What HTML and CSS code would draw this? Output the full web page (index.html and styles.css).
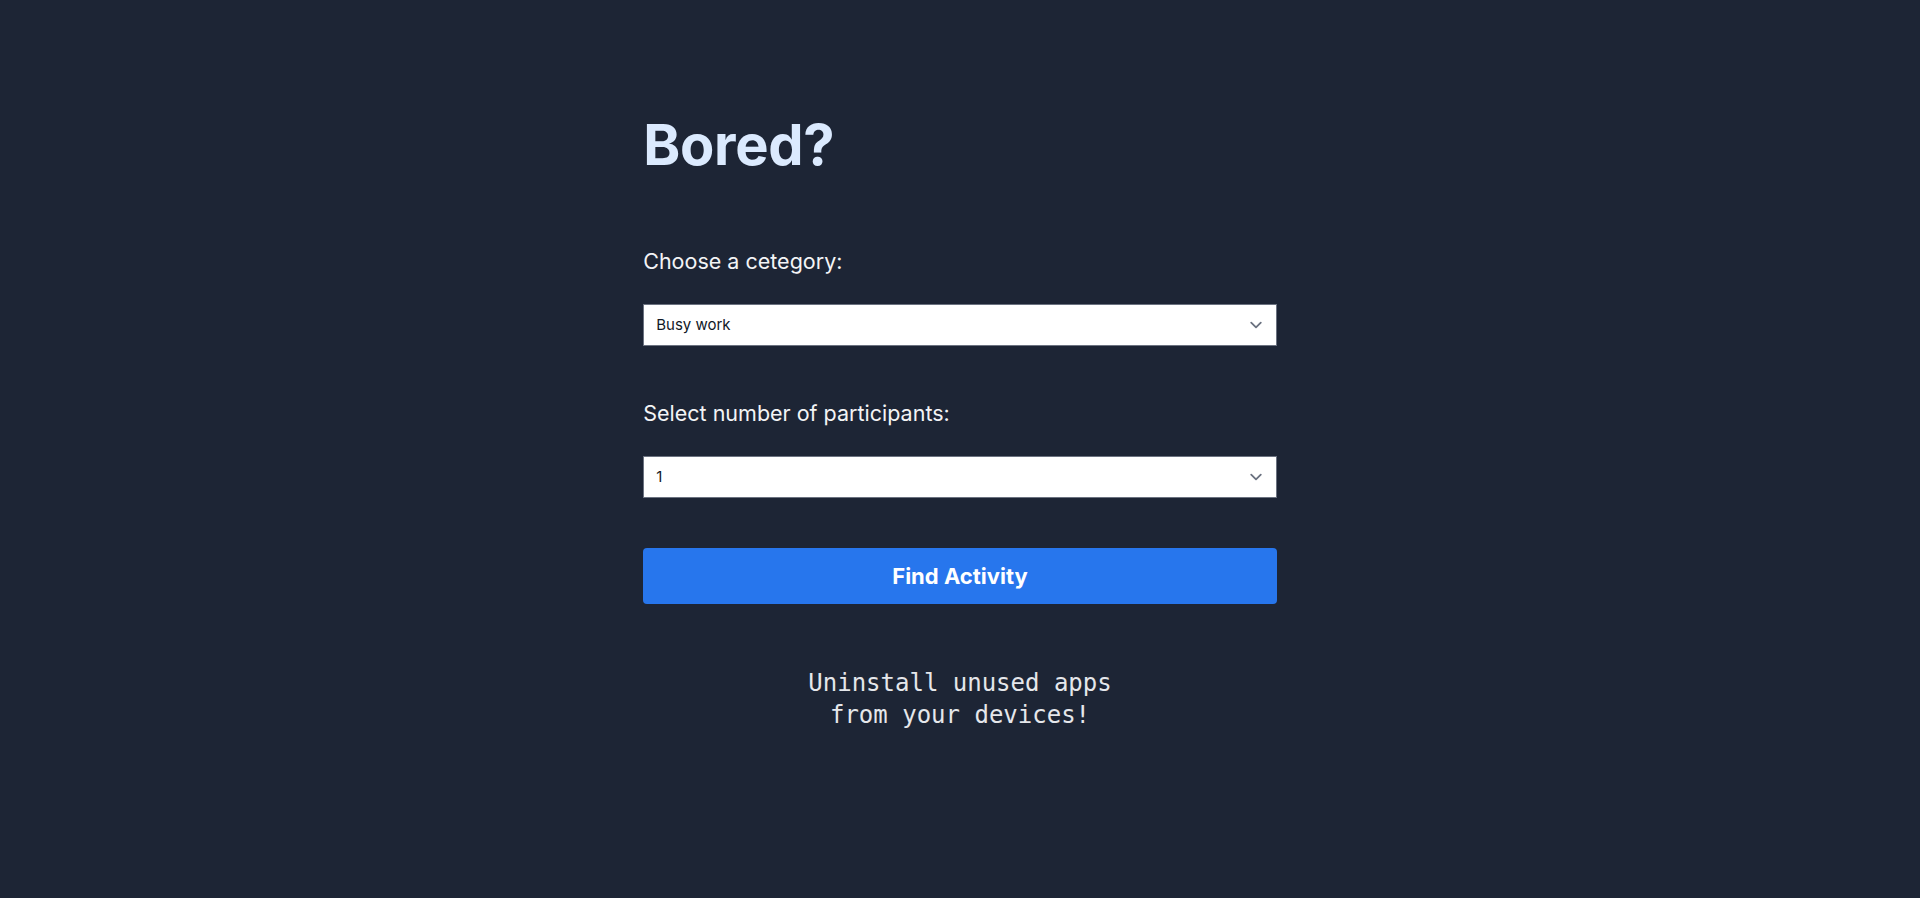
FILE: index.html
```html
<!DOCTYPE html>
<html lang="en">
<head>
<meta charset="utf-8">
<title>Bored?</title>
<link rel="stylesheet" href="styles.css">
</head>
<body>
<main class="container">
  <h1 class="title">Bored?</h1>
  <label class="label" for="category">Choose a cetegory:</label>
  <div class="select-wrap">
    <select id="category" class="select">
      <option>Busy work</option>
    </select>
    <svg class="chevron" viewBox="0 0 20 20" width="24" height="24" aria-hidden="true"><path d="M6 8l4 4 4-4" fill="none" stroke="#6b7280" stroke-width="1.5" stroke-linecap="round" stroke-linejoin="round"/></svg>
  </div>
  <label class="label label-second" for="participants">Select number of participants:</label>
  <div class="select-wrap">
    <select id="participants" class="select">
      <option>1</option>
    </select>
    <svg class="chevron" viewBox="0 0 20 20" width="24" height="24" aria-hidden="true"><path d="M6 8l4 4 4-4" fill="none" stroke="#6b7280" stroke-width="1.5" stroke-linecap="round" stroke-linejoin="round"/></svg>
  </div>
  <button class="button" type="button">Find Activity</button>
  <p class="result">Uninstall unused apps<br>from your devices!</p>
</main>
</body>
</html>
```
FILE: styles.css
```css
* { box-sizing: border-box; }
html, body { margin: 0; padding: 0; }
body {
  background: #1d2535;
  font-family: Inter, "Noto Sans", sans-serif;
  min-height: 898px;
}
.container {
  width: 33%;
  margin: 0 auto;
  padding-top: 117px;
  display: flex;
  flex-direction: column;
}
.title {
  margin: 0;
  font-size: 56px;
  line-height: 1;
  font-weight: 700;
  color: #dbeafe;
  letter-spacing: -0.3px;
}
.label {
  display: block;
  margin-top: 74px;
  margin-bottom: 29px;
  font-size: 21.5px;
  line-height: 28px;
  color: #f3f4f6;
}
.label-second { margin-top: 53px; }
.select-wrap { position: relative; }
.select {
  display: block;
  width: 100%;
  height: 42px;
  appearance: none;
  -webkit-appearance: none;
  background: #fff;
  border: 1px solid #6b7280;
  border-radius: 0;
  padding: 8px 40px 8px 12px;
  font-family: Inter, "Noto Sans", sans-serif;
  font-size: 15px;
  line-height: 24px;
  color: #111827;
}
.chevron {
  position: absolute;
  right: 9px;
  top: 9px;
  pointer-events: none;
}
.button {
  margin-top: 50px;
  height: 56px;
  border: 0;
  border-radius: 4px;
  background: #2776ed;
  color: #fff;
  font-family: Inter, "Noto Sans", sans-serif;
  font-size: 22px;
  font-weight: 700;
}
.result {
  margin: 63px 0 0;
  text-align: center;
  font-family: "DejaVu Sans Mono", monospace;
  font-size: 24px;
  line-height: 32px;
  color: #e5e7eb;
}
```
